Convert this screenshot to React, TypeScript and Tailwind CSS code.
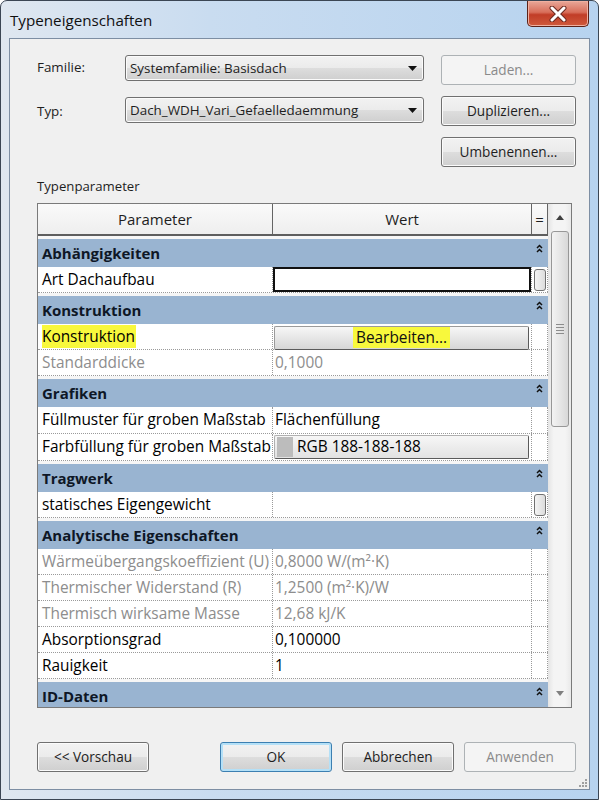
import React from "react";

const grad =
  "bg-[linear-gradient(to_bottom,#f2f2f2_0%,#ebebeb_50%,#dddddd_51%,#cfcfcf_100%)]";

function Btn({
  children,
  kind = "normal",
  w = "w-[135px]",
}: {
  children: React.ReactNode;
  kind?: "normal" | "disabled" | "default";
  w?: string;
}) {
  const cls =
    kind === "disabled"
      ? "border-[#adb2b5] bg-[#f4f4f4] text-[#8a8a8a]"
      : kind === "default"
      ? `border-[#3c7fb1] ${grad} shadow-[inset_0_0_0_2px_#b4e0f7] text-[#1e1e1e]`
      : `border-[#707070] ${grad} shadow-[inset_0_0_0_1px_#fbfbfb] text-[#1e1e1e]`;
  return (
    <div
      className={`${w} h-[30px] rounded-[3px] border ${cls} flex items-center justify-center text-[13.6px]`}
    >
      {children}
    </div>
  );
}

function Select({ text }: { text: string }) {
  return (
    <div
      className={`mt-[1px] w-[299px] h-[26px] rounded-[3px] border border-[#707070] ${grad} shadow-[inset_0_0_0_1px_#fbfbfb] flex items-center pl-[4px] pr-[6px]`}
    >
      <span className="flex-1 text-[13.4px] text-[#1e1e1e] whitespace-nowrap">{text}</span>
      <svg width="9" height="5" viewBox="0 0 9 5">
        <path d="M0 0H9L4.5 5Z" fill="#111" />
      </svg>
    </div>
  );
}

function Chevron() {
  return (
    <svg width="7" height="9" viewBox="0 0 7 9">
      <polyline points="1,4 3.5,1.5 6,4" fill="none" stroke="#111" strokeWidth="1.5" />
      <polyline points="1,8 3.5,5.5 6,8" fill="none" stroke="#111" strokeWidth="1.5" />
    </svg>
  );
}

function Group({ title }: { title: string }) {
  return (
    <div className="h-[31px] shrink-0 border-t-[3px] border-[#f6f6f6] bg-[#99b4d1] flex">
      <div className="flex-1 pl-[4px] flex items-center text-[15px] font-bold text-[#0e1726] whitespace-nowrap">
        {title}
      </div>
      <div className="w-[16px] flex justify-center pt-[5px] pr-[2px]">
        <Chevron />
      </div>
    </div>
  );
}

function EqBtn() {
  return (
    <div className="w-[12px] h-[22px] rounded-[3px] border border-[#707070] bg-[linear-gradient(to_right,#f4f4f4,#dcdcdc)]" />
  );
}

type RowDef = {
  label: React.ReactNode;
  value?: React.ReactNode;
  grey?: boolean;
  h?: string;
  eq?: boolean;
  raw?: boolean;
};

function Row({ label, value, grey, h = "h-[26px]", eq, raw }: RowDef) {
  const tc = grey ? "text-[#8d8d8d]" : "text-[#000]";
  return (
    <div className={`${h} shrink-0 flex bg-white border-b border-dotted border-[#9a9a9a] text-[15.4px] ${tc}`}>
      <div className="w-[235px] border-r border-dotted border-[#9a9a9a] pl-[4px] flex items-center whitespace-nowrap overflow-hidden">
        {label}
      </div>
      <div
        className={`w-[259px] border-r border-dotted border-[#9a9a9a] flex items-center whitespace-nowrap ${
          raw ? "" : "pl-[2px]"
        }`}
      >
        {value}
      </div>
      <div className="w-[16px] border-r border-dotted border-[#9a9a9a] flex items-center justify-center">
        {eq ? <EqBtn /> : null}
      </div>
    </div>
  );
}

function Scrollbar() {
  return (
    <div className="w-[23px] flex flex-col bg-[linear-gradient(to_right,#e4e4e4,#f4f4f4_25%,#f4f4f4_75%,#e9e9e9)]">
      <div className="h-[27px] shrink-0 flex items-center justify-center">
        <svg width="8" height="5" viewBox="0 0 8 5">
          <path d="M0 5L4 0L8 5Z" fill="#404040" />
        </svg>
      </div>
      <div className="flex-1 flex flex-col">
        <div className="ml-[3px] mr-[2px] h-[196px] rounded-[3px] border border-[#979797] bg-[linear-gradient(to_right,#f3f3f3,#e6e6e6_50%,#d8d8d8)] flex flex-col items-center justify-center gap-[2px]">
          <div className="w-[8px] h-[1px] bg-[#8c8c8c]" />
          <div className="w-[8px] h-[1px] bg-[#8c8c8c]" />
          <div className="w-[8px] h-[1px] bg-[#8c8c8c]" />
          <div className="w-[8px] h-[1px] bg-[#8c8c8c]" />
        </div>
      </div>
      <div className="h-[27px] shrink-0 flex items-center justify-center">
        <svg width="8" height="5" viewBox="0 0 8 5">
          <path d="M0 0L8 0L4 5Z" fill="#808080" />
        </svg>
      </div>
    </div>
  );
}

export default function App() {
  return (
    <div className="w-[599px] h-[800px] overflow-hidden rounded-t-[7px] border border-[#3b4654] bg-[linear-gradient(to_right,#dfe7f0,#c9dcf0_35%,#b7d3ef)] font-['Open_Sans',sans-serif] flex flex-col">
      {/* Title bar */}
      <div className="h-[37px] shrink-0 flex items-start">
        <div className="pl-[9px] pt-[8px] text-[15.2px] text-[#101010]">Typeneigenschaften</div>
        <div className="ml-auto mr-[9px] w-[62px] h-[26px] rounded-b-[5px] border border-t-0 border-[#5c2218] bg-[linear-gradient(to_bottom,#e9a899_0%,#d86e5a_45%,#c13d27_55%,#cf5a3c_100%)] shadow-[inset_0_0_0_1px_#f0b0a0] flex items-center justify-center">
          <svg width="18" height="16" viewBox="0 0 18 16">
            <path d="M3 2L15 14M15 2L3 14" stroke="#6b2a20" strokeWidth="5" strokeLinecap="round" />
            <path d="M3 2L15 14M15 2L3 14" stroke="#ffffff" strokeWidth="3" strokeLinecap="round" />
          </svg>
        </div>
      </div>

      {/* Client area */}
      <div className="ml-[8px] w-[581px] h-[752px] shrink-0 border border-[#7d8ea3] bg-[#f0f0f0] relative flex flex-col pl-[27px] pr-[13px] pt-[15px] text-[#1e1e1e]">
        <div className="flex items-start">
          <div className="w-[88px] h-[27px] flex items-center text-[13.4px]">Familie:</div>
          <Select text="Systemfamilie: Basisdach" />
          <div className="ml-auto mt-[1px]">
            <Btn kind="disabled">Laden...</Btn>
          </div>
        </div>
        <div className="mt-[11px] flex items-start">
          <div className="w-[88px] h-[28px] mt-[1px] flex items-center text-[13.4px]">Typ:</div>
          <Select text="Dach_WDH_Vari_Gefaelledaemmung" />
          <div className="ml-auto">
            <Btn>Duplizieren...</Btn>
          </div>
        </div>
        <div className="mt-[11px] flex justify-end">
          <Btn>Umbenennen...</Btn>
        </div>

        <div className="mt-[11px] h-[18px] flex items-center text-[13.2px]">Typenparameter</div>

        {/* Table */}
        <div className="mt-[7px] w-[535px] h-[505px] border border-[#7a7a7a] flex bg-[#f0f0f0]">
          <div className="w-[510px] flex flex-col overflow-hidden">
            <div className="h-[32px] shrink-0 flex border-b-2 border-[#5e5e5e] bg-[linear-gradient(to_bottom,#fafafa,#eeeeee)] text-[15px] text-[#1e1e1e]">
              <div className="w-[235px] border-r border-[#646464] flex items-center justify-center">Parameter</div>
              <div className="w-[259px] border-r border-[#646464] flex items-center justify-center">Wert</div>
              <div className="w-[16px] border-r border-[#646464] flex items-center justify-center">=</div>
            </div>
            <div className="flex-1 flex flex-col overflow-hidden">
              <Group title="Abhängigkeiten" />
              <Row
                label="Art Dachaufbau"
                raw
                eq
                value={<div className="w-full h-full border-2 border-[#111] bg-white" />}
              />
              <Group title="Konstruktion" />
              <Row
                label={<span className="bg-[#f8f83c] h-[23px] flex items-center pr-[1px]">Konstruktion</span>}
                raw
                value={
                  <div className="ml-[1px] mr-[2px] mt-[2px] w-full h-[24px] rounded-[2px] border border-[#9a9a9a] border-r-[#5a5a5a] border-b-[#5a5a5a] bg-[linear-gradient(to_bottom,#f7f7f7,#e6e6e6_50%,#d6d6d6)] flex items-center justify-center">
                    <span className="bg-[#f8f83c] h-[21px] flex items-center px-[3px] text-[#111]">Bearbeiten...</span>
                  </div>
                }
              />
              <Row label="Standarddicke" grey value="0,1000" />
              <Group title="Grafiken" />
              <Row label="Füllmuster für groben Maßstab" h="h-[27px]" value="Flächenfüllung" />
              <Row
                label="Farbfüllung für groben Maßstab"
                h="h-[27px]"
                raw
                value={
                  <div className="ml-[1px] mr-[2px] w-full h-[24px] rounded-[2px] border border-[#b0b0b0] border-r-[#5a5a5a] border-b-[#5a5a5a] bg-[linear-gradient(to_bottom,#f7f7f7,#ececec_50%,#e2e2e2)] flex items-center pl-[2px] gap-[4px]">
                    <div className="w-[16px] h-[20px] bg-[#bcbcbc]" />
                    <span>RGB 188-188-188</span>
                  </div>
                }
              />
              <Group title="Tragwerk" />
              <Row label="statisches Eigengewicht" eq value="" />
              <Group title="Analytische Eigenschaften" />
              <Row label="Wärmeübergangskoeffizient (U)" grey value="0,8000 W/(m²·K)" />
              <Row label="Thermischer Widerstand (R)" grey value="1,2500 (m²·K)/W" />
              <Row label="Thermisch wirksame Masse" grey value="12,68 kJ/K" />
              <Row label="Absorptionsgrad" value="0,100000" />
              <Row label="Rauigkeit" value="1" />
              <Group title="ID-Daten" />
            </div>
          </div>
          <Scrollbar />
        </div>

        {/* Bottom buttons */}
        <div className="mt-[34px] flex items-start">
          <Btn w="w-[112px]">&lt;&lt; Vorschau</Btn>
          <div className="ml-auto flex gap-[10px]">
            <Btn w="w-[112px]" kind="default">OK</Btn>
            <Btn w="w-[112px]">Abbrechen</Btn>
            <Btn w="w-[112px]" kind="disabled">Anwenden</Btn>
          </div>
        </div>

        {/* resize grip */}
        <div className="absolute right-[1px] bottom-[1px]">
          <svg width="11" height="11" viewBox="0 0 11 11">
            {[
              [8, 2],
              [5, 5],
              [8, 5],
              [2, 8],
              [5, 8],
              [8, 8],
            ].map(([x, y], i) => (
              <rect key={i} x={x} y={y} width="2" height="2" fill="#a0a0a0" />
            ))}
          </svg>
        </div>
      </div>
    </div>
  );
}
